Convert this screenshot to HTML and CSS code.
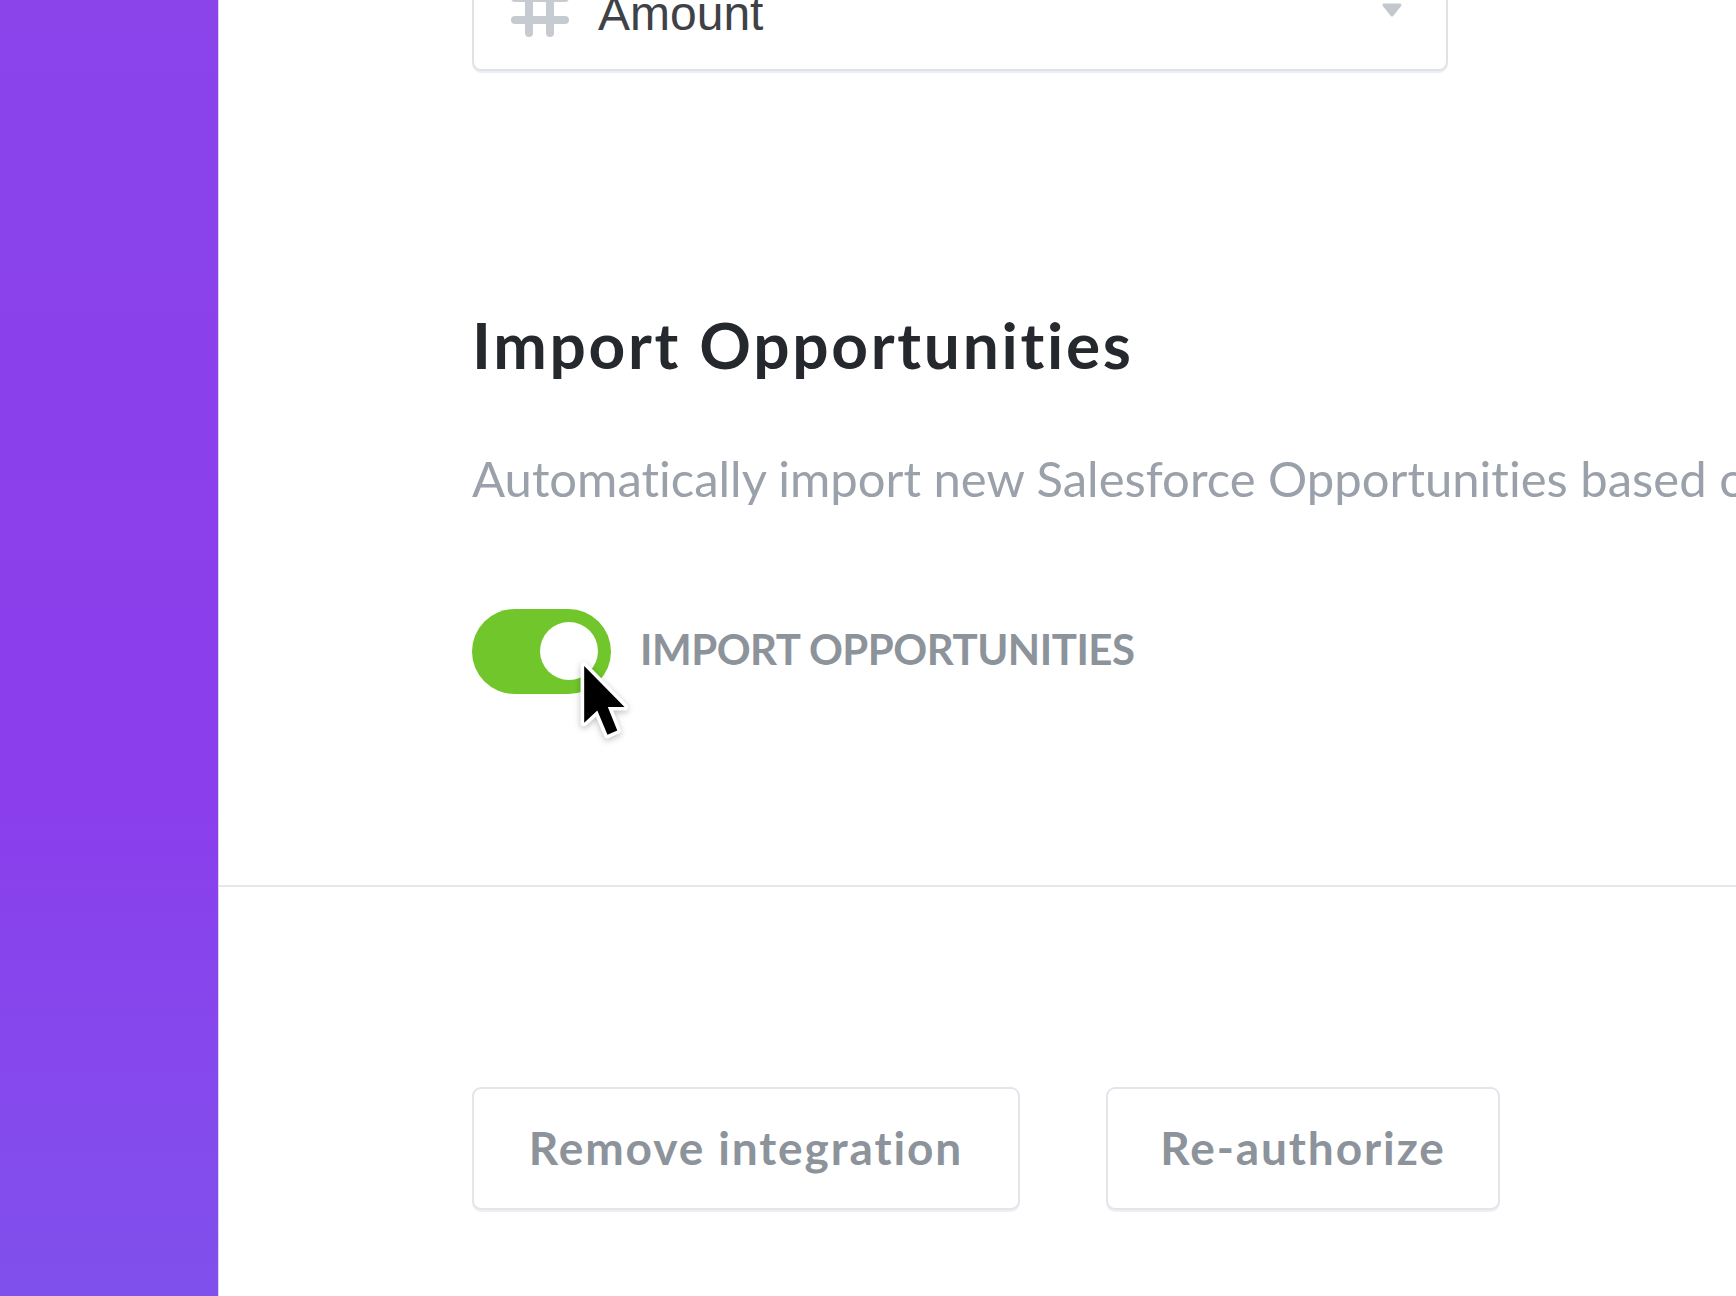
FILE: index.html
```html
<!DOCTYPE html>
<html lang="en">
<head>
<meta charset="utf-8">
<title>Salesforce integration</title>
<link rel="stylesheet" href="styles.css">
</head>
<body>
  <aside class="sidebar"></aside>
  <main class="main">
    <section class="field">
      <div class="select">
        <svg class="hash" width="58" height="60" viewBox="0 0 58 60" aria-hidden="true">
          <g stroke="#c6cbd1" stroke-width="8" stroke-linecap="round" fill="none">
            <line x1="18" y1="0" x2="18" y2="56"/>
            <line x1="39" y1="0" x2="39" y2="56"/>
            <line x1="4" y1="21" x2="54" y2="21"/>
            <line x1="4" y1="43" x2="54" y2="43"/>
          </g>
        </svg>
        <span class="select-value">Amount</span>
        <svg class="caret" width="20" height="14" viewBox="0 0 20 14" aria-hidden="true">
          <path d="M2 2 H18 L10 12 Z" fill="#c3c8ce" stroke="#c3c8ce" stroke-width="3" stroke-linejoin="round"/>
        </svg>
      </div>
    </section>

    <section class="import">
      <h2 class="title">Import Opportunities</h2>
      <p class="desc">Automatically import new Salesforce Opportunities based on the stage you choose below.</p>
      <div class="toggle-row">
        <span class="toggle"><span class="knob"></span></span>
        <span class="toggle-label">IMPORT OPPORTUNITIES</span>
        <svg class="cursor" width="53" height="82" viewBox="-1.5 -1.5 16 25" aria-hidden="true">
          <path d="M0 0 V17.3 L4 13.6 L7.1 21 L10.1 19.7 L7.2 12.5 H12.3 Z" fill="#000" stroke="#fff" stroke-width="2.2" stroke-linejoin="round" paint-order="stroke"/>
        </svg>
      </div>
    </section>

    <hr class="divider">

    <div class="actions">
      <button class="btn btn-remove" type="button">Remove integration</button>
      <button class="btn btn-reauth" type="button">Re-authorize</button>
    </div>
  </main>
</body>
</html>
```

FILE: styles.css
```css
* { box-sizing: border-box; }

html, body {
  margin: 0;
  height: 100%;
  overflow: hidden;
  background: #ffffff;
}

body {
  display: flex;
  font-family: "Lato", "Noto Sans", sans-serif;
  font-variant-ligatures: none;
}

.sidebar {
  flex: 0 0 219px;
  height: 1296px;
  background: linear-gradient(to bottom, #8a44ea 0%, #8b3eec 60%, #8050ec 100%);
  border-right: 1px solid #d9d4e6;
}

.main {
  flex: 1 1 auto;
  min-width: 0;
  overflow: hidden;
}

.field,
.import,
.actions {
  padding-left: 253px;
}

.select {
  display: flex;
  align-items: center;
  width: 976px;
  height: 114px;
  margin-top: -43px;
  padding: 0 44px 0 37px;
  border: 2px solid #dfe3e7;
  border-radius: 9px;
  box-shadow: 0 2px 0 #eceff2;
}

.hash {
  flex: 0 0 auto;
  margin-bottom: 14px;
}

.select-value {
  margin-left: 29px;
  font-family: "Liberation Sans", Arial, sans-serif;
  font-size: 48px;
  line-height: 1;
  color: #3e4247;
}

.caret {
  margin-left: auto;
  margin-bottom: 8px;
}

.title {
  margin: 236px 0 0;
  font-size: 64px;
  font-weight: 700;
  line-height: 1.2;
  letter-spacing: 2.7px;
  color: #25292d;
}

.desc {
  margin: 65px 0 0;
  font-size: 49px;
  font-weight: 400;
  line-height: 1.2;
  color: #9aa1aa;
  white-space: nowrap;
}

.toggle-row {
  position: relative;
  display: flex;
  align-items: center;
  gap: 29px;
  margin-top: 101px;
}

.toggle {
  display: flex;
  align-items: center;
  justify-content: flex-end;
  width: 139px;
  height: 85px;
  padding-right: 13px;
  border-radius: 43px;
  background: #70c62b;
}

.knob {
  width: 58px;
  height: 58px;
  border-radius: 50%;
  background: #ffffff;
}

.toggle-label {
  margin-bottom: 4px;
  font-size: 42px;
  font-weight: 700;
  line-height: 1.2;
  color: #8c939b;
  letter-spacing: -0.5px;
}

.cursor {
  position: absolute;
  left: 107px;
  top: 52px;
  filter: drop-shadow(0 2px 3px rgba(0, 0, 0, 0.25));
}

.divider {
  margin: 191px 0 0;
  border: 0;
  height: 2px;
  background: #e4e8ec;
}

.actions {
  display: flex;
  gap: 86px;
  margin-top: 200px;
}

.btn {
  height: 123px;
  border: 2px solid #e2e5e9;
  border-radius: 9px;
  background: #ffffff;
  box-shadow: 0 2px 0 #eef0f2;
  font-family: "Lato", "Noto Sans", sans-serif;
  font-variant-ligatures: none;
  font-size: 46px;
  font-weight: 700;
  letter-spacing: 1.9px;
  color: #8c939b;
  padding: 0 0 2px;
}

.btn-remove { width: 548px; }
.btn-reauth { width: 394px; }
```
